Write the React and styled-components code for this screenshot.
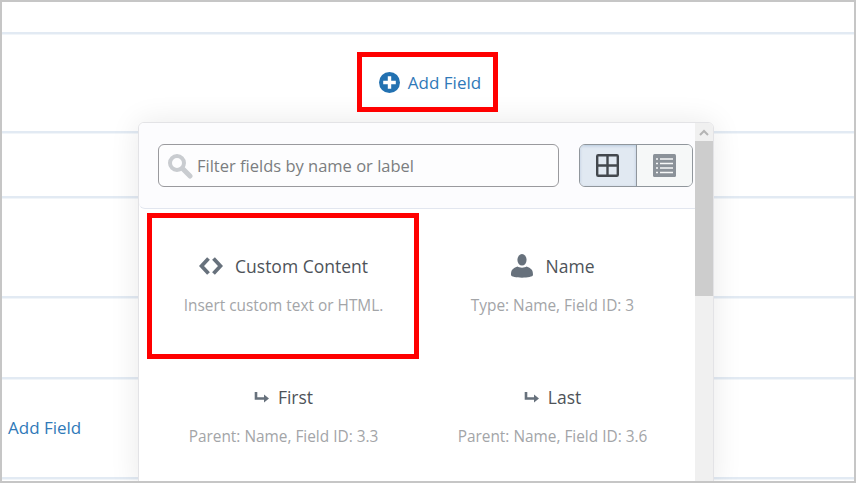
import React from 'react';
import styled, { createGlobalStyle } from 'styled-components';

const GlobalStyle = createGlobalStyle`
  html, body { margin: 0; padding: 0; background: #fff; overflow: hidden; }
  body { font-family: "Open Sans", "Noto Sans", sans-serif; }
`;

const Frame = styled.div`
  position: relative;
  width: 856px;
  height: 483px;
  box-sizing: border-box;
  border: 2px solid #c6c6c6;
  overflow: hidden;
  background: #fff;
`;

const Row = styled.div`
  height: ${(p) => p.$h}px;
  box-sizing: border-box;
  border-bottom: 2px solid #e2eaf3;
  box-shadow: 0 1px 0 #f1f5f9;
  display: flex;
  align-items: center;
  justify-content: ${(p) => (p.$center ? 'center' : 'flex-start')};
  padding-left: ${(p) => (p.$center ? 4 : 6)}px;
  padding-bottom: ${(p) => (p.$center ? 0 : 2)}px;
`;

const AddLink = styled.a`
  display: flex;
  align-items: center;
  gap: 8px;
  color: #3079b8;
  font-size: 17px;
`;

const Popover = styled.div`
  position: absolute;
  left: 136px;
  top: 120px;
  width: 576px;
  height: 370px;
  box-sizing: border-box;
  background: #fff;
  border: 1px solid #e3e3e6;
  border-radius: 6px;
  box-shadow: 0 0 30px rgba(0, 0, 0, 0.09);
  display: flex;
  overflow: hidden;
`;

const PanelBody = styled.div`
  width: 556px;
  display: flex;
  flex-direction: column;
`;

const SearchBar = styled.div`
  height: 86px;
  box-sizing: border-box;
  background: #fcfcfe;
  border-bottom: 1px solid #e2e6ef;
  border-bottom-left-radius: 6px;
  padding: 21px 2px 0 19px;
  display: flex;
  gap: 20px;
`;

const SearchBox = styled.div`
  width: 401px;
  height: 43px;
  box-sizing: border-box;
  border: 1px solid #9a9a9e;
  border-radius: 6px;
  background: #fdfdfe;
  display: flex;
  align-items: center;
  gap: 4px;
  padding-left: 8px;
  color: #7b7d80;
  font-size: 16.5px;
`;

const ToggleGroup = styled.div`
  display: flex;
  width: 114px;
  height: 43px;
  box-sizing: border-box;
  border: 1px solid #90969c;
  border-radius: 6px;
  overflow: hidden;
`;

const ToggleButton = styled.div`
  flex: 1;
  display: flex;
  align-items: center;
  justify-content: center;
  background: ${(p) => (p.$active ? '#e1e9f2' : '#f6f8f8')};
  box-shadow: ${(p) => (p.$active ? 'inset 0 1px 3px rgba(60, 110, 160, 0.25)' : 'none')};
  & + & { border-left: 1px solid #90969c; }
`;

const FieldGrid = styled.div`
  display: grid;
  grid-template-columns: 269px 269px;
  grid-auto-rows: 131px;
  padding-left: 10px;
`;

const FieldCard = styled.div`
  display: flex;
  flex-direction: column;
  align-items: center;
  padding-top: 45px;
`;

const FieldTitle = styled.div`
  display: flex;
  align-items: center;
  height: 24px;
  gap: ${(p) => p.$gap}px;
  color: #4e5359;
  font-size: 17.5px;
`;

const FieldHint = styled.div`
  margin-top: 18px;
  color: #a3a5a8;
  font-size: 15.4px;
  line-height: 20px;
  white-space: nowrap;
`;

const Scrollbar = styled.div`
  width: 18px;
  margin-left: auto;
  background: #f0f0f0;
  display: flex;
  flex-direction: column;
  align-items: center;
`;

const ScrollArrow = styled.div`
  height: 18px;
  width: 100%;
  display: flex;
  align-items: center;
  justify-content: center;
`;

const ScrollThumb = styled.div`
  width: 100%;
  height: 155px;
  background: #cdcdcd;
`;

const Callout = styled.div`
  position: absolute;
  left: ${(p) => p.$x}px;
  top: ${(p) => p.$y}px;
  width: ${(p) => p.$w}px;
  height: ${(p) => p.$h}px;
  box-sizing: border-box;
  border: 5px solid #ff0000;
`;

const PlusIcon = () => (
  <svg width="21" height="21" viewBox="0 0 21 21">
    <circle cx="10.5" cy="10.5" r="10.5" fill="#2271b1" />
    <path d="M8.8 4.2h3.4v4.6h4.6v3.4h-4.6v4.6H8.800v-4.600H4.200V8.800h4.600z" fill="#fff" />
  </svg>
);

const SearchIcon = () => (
  <svg width="26" height="26" viewBox="0 0 26 26">
    <circle cx="10" cy="10" r="7" fill="none" stroke="#c9ccd0" strokeWidth="4" />
    <path d="M15.5 15.5L23 23" stroke="#c9ccd0" strokeWidth="5" strokeLinecap="round" />
  </svg>
);

const GridIcon = () => (
  <svg width="23" height="23" viewBox="0 0 23 23">
    <rect x="1.2" y="1.2" width="20.6" height="20.6" rx="1" fill="none" stroke="#43484e" strokeWidth="2.4" />
    <path d="M11.5 1v21M1 11.5h21" stroke="#43484e" strokeWidth="2.4" />
  </svg>
);

const ListIcon = () => (
  <svg width="23" height="23" viewBox="0 0 23 23">
    <rect width="23" height="23" rx="1.5" fill="#8b9299" />
    <path d="M3 5h2M7 5h13M3 9.500h2M7 9.500h13M3 14h2M7 14h13M3 18.500h2M7 18.500h13" stroke="#f6f8f8" strokeWidth="1.600" />
  </svg>
);

const CodeIcon = () => (
  <svg width="24" height="18" viewBox="0 0 24 18">
    <path d="M9.500 1.500L2.500 9l7 7.500M14.500 1.500l7 7.500-7 7.500" fill="none" stroke="#67717c" strokeWidth="3.800" />
  </svg>
);

const UserIcon = () => (
  <svg width="22" height="24" viewBox="0 0 22 24">
    <ellipse cx="11" cy="5.800" rx="4.600" ry="5.800" fill="#67717c" />
    <path d="M0 21c0-4.500 1-6.500 6.500-8.500 1.500 1.500 7.500 1.500 9 0 5.500 2 6.500 4 6.500 8.500 0 3.500-22 3.500-22 0z" fill="#67717c" />
  </svg>
);

const SubIcon = () => (
  <svg width="15" height="13" viewBox="0 0 15 13">
    <path d="M2 1v6.500h9" fill="none" stroke="#67717c" strokeWidth="2.600" />
    <path d="M10 3.500l5 4-5 4z" fill="#67717c" />
  </svg>
);

const fields = [
  { title: 'Custom Content', hint: 'Insert custom text or HTML.', icon: <CodeIcon />, gap: 12 },
  { title: 'Name', hint: 'Type: Name, Field ID: 3', icon: <UserIcon />, gap: 13 },
  { title: 'First', hint: 'Parent: Name, Field ID: 3.3', icon: <SubIcon />, gap: 9 },
  { title: 'Last', hint: 'Parent: Name, Field ID: 3.6', icon: <SubIcon />, gap: 9 },
];

export default function App() {
  return (
    <Frame>
      <GlobalStyle />
      <Row $h={32} />
      <Row $h={99} $center>
        <AddLink><PlusIcon />Add Field</AddLink>
      </Row>
      <Row $h={65} />
      <Row $h={100} />
      <Row $h={81} />
      <Row $h={100}>
        <AddLink>Add Field</AddLink>
      </Row>

      <Popover>
        <PanelBody>
          <SearchBar>
            <SearchBox><SearchIcon />Filter fields by name or label</SearchBox>
            <ToggleGroup>
              <ToggleButton $active><GridIcon /></ToggleButton>
              <ToggleButton><ListIcon /></ToggleButton>
            </ToggleGroup>
          </SearchBar>
          <FieldGrid>
            {fields.map((f) => (
              <FieldCard key={f.title}>
                <FieldTitle $gap={f.gap}>{f.icon}{f.title}</FieldTitle>
                <FieldHint>{f.hint}</FieldHint>
              </FieldCard>
            ))}
          </FieldGrid>
        </PanelBody>
        <Scrollbar>
          <ScrollArrow>
            <svg width="10" height="7" viewBox="0 0 10 7">
              <path d="M1 6l4-4 4 4" fill="none" stroke="#b4b4b4" strokeWidth="2" />
            </svg>
          </ScrollArrow>
          <ScrollThumb />
        </Scrollbar>
      </Popover>

      <Callout $x={355} $y={50} $w={141} $h={60} />
      <Callout $x={145} $y={211} $w={272} $h={146} />
    </Frame>
  );
}
